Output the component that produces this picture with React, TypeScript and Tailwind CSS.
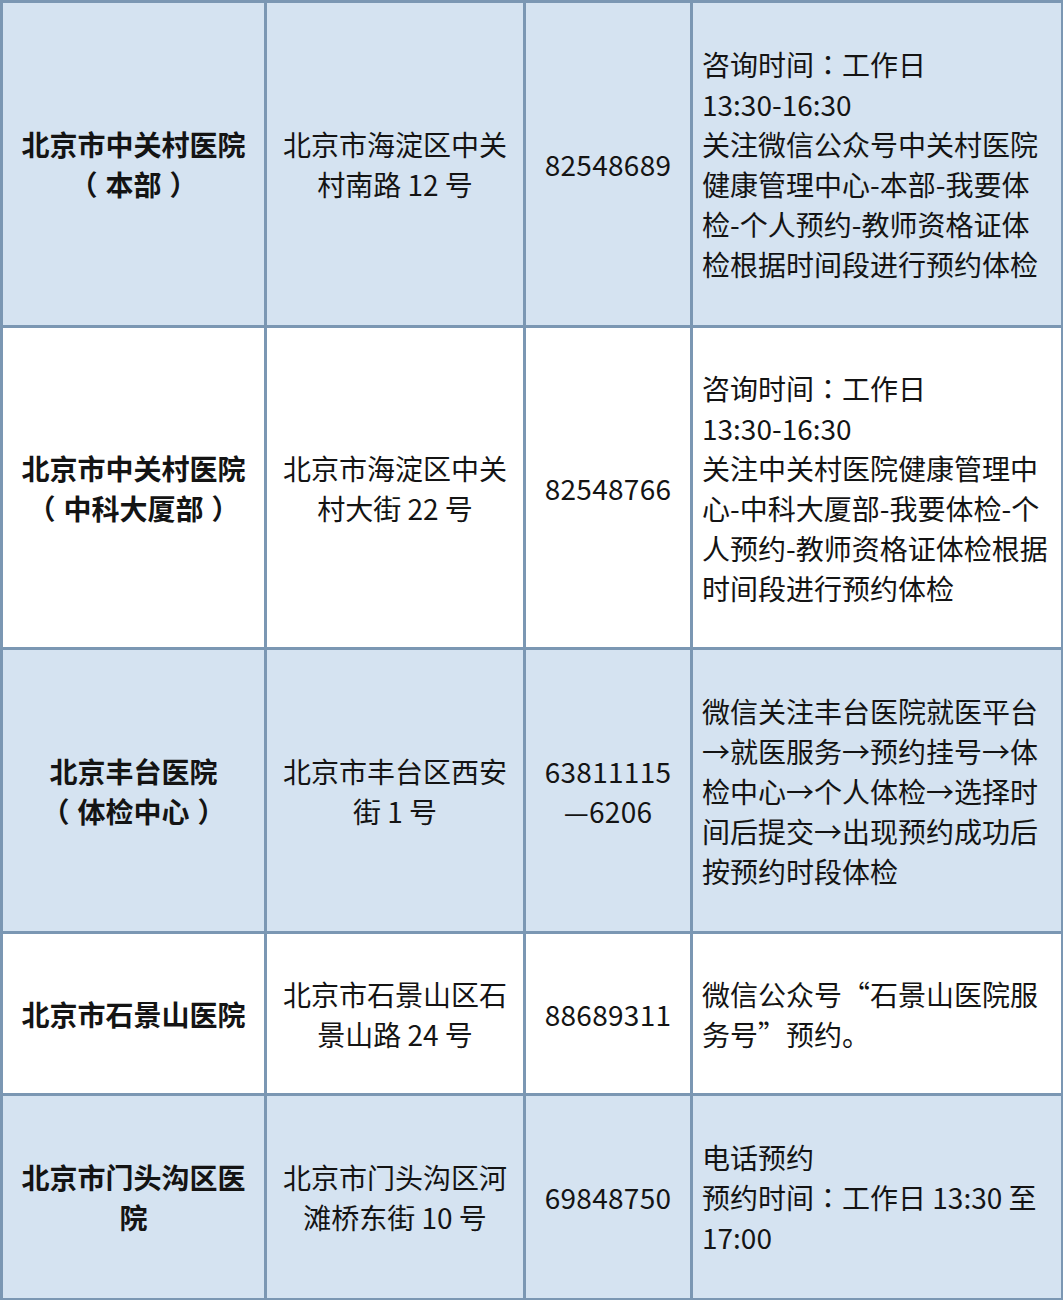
const rows = [
  {
    h: "h-[325px]",
    bg: "bg-[#d5e3f1]",
    name: ["北京市中关村医院", "（本部）"],
    addr: ["北京市海淀区中关", "村南路 12 号"],
    tel: ["82548689"],
    note: [
      "咨询时间：工作日",
      "13:30-16:30",
      "关注微信公众号中关村医院",
      "健康管理中心-本部-我要体",
      "检-个人预约-教师资格证体",
      "检根据时间段进行预约体检",
    ],
  },
  {
    h: "h-[322px]",
    bg: "bg-white",
    name: ["北京市中关村医院", "（中科大厦部）"],
    addr: ["北京市海淀区中关", "村大街 22 号"],
    tel: ["82548766"],
    note: [
      "咨询时间：工作日",
      "13:30-16:30",
      "关注中关村医院健康管理中",
      "心-中科大厦部-我要体检-个",
      "人预约-教师资格证体检根据",
      "时间段进行预约体检",
    ],
  },
  {
    h: "h-[284px]",
    bg: "bg-[#d5e3f1]",
    name: ["北京丰台医院", "（体检中心）"],
    addr: ["北京市丰台区西安", "街 1 号"],
    tel: ["63811115", "—6206"],
    note: [
      "微信关注丰台医院就医平台",
      "→就医服务→预约挂号→体",
      "检中心→个人体检→选择时",
      "间后提交→出现预约成功后",
      "按预约时段体检",
    ],
  },
  {
    h: "h-[162px]",
    bg: "bg-white",
    name: ["北京市石景山医院"],
    addr: ["北京市石景山区石", "景山路 24 号"],
    tel: ["88689311"],
    note: ["微信公众号“石景山医院服", "务号”预约。"],
  },
  {
    h: "h-[205px]",
    bg: "bg-[#d5e3f1]",
    name: ["北京市门头沟区医", "院"],
    addr: ["北京市门头沟区河", "滩桥东街 10 号"],
    tel: ["69848750"],
    note: ["电话预约", "预约时间：工作日 13:30 至", "17:00"],
  },
];

// split out full-width colon / parens so they sit centred like the original
const renderLine = (t: string) =>
  t.split(/([：（）])/).map((part, i) => {
    if (part === "：")
      return (
        <span key={i} style={{ fontFamily: '"Noto Sans CJK TC", sans-serif' }}>
          ：
        </span>
      );
    if (part === "（")
      return (
        <span key={i} className="mr-[8px]">
          （
        </span>
      );
    if (part === "）")
      return (
        <span key={i} className="ml-[8px]">
          ）
        </span>
      );
    return <span key={i}>{part}</span>;
  });

const Lines = ({ items }: { items: string[] }) => (
  <>
    {items.map((t, i) => (
      <div key={i} className="whitespace-nowrap">
        {renderLine(t)}
      </div>
    ))}
  </>
);

export default function App() {
  const cell = "border-[3px] border-[#7b97b3] align-middle";
  return (
    <div
      className="w-[1063px] h-[1300px] bg-white text-[28px] leading-[40px] text-[#141414]"
      style={{ fontFamily: '"Noto Sans CJK SC", "Noto Sans", sans-serif' }}
    >
      <table className="w-[1061px] table-fixed border-collapse">
        <colgroup>
          <col className="w-[264px]" />
          <col className="w-[259px]" />
          <col className="w-[167px]" />
          <col className="w-[371px]" />
        </colgroup>
        <tbody>
          {rows.map((r, i) => (
            <tr key={i} className={`${r.h} ${r.bg}`}>
              <td className={`${cell} text-center font-bold`}>
                <Lines items={r.name} />
              </td>
              <td className={`${cell} text-center`}>
                <Lines items={r.addr} />
              </td>
              <td className={`${cell} text-center tracking-[0.3px]`}>
                <Lines items={r.tel} />
              </td>
              <td className={`${cell} pl-[9px] text-left`}>
                <Lines items={r.note} />
              </td>
            </tr>
          ))}
        </tbody>
      </table>
    </div>
  );
}
